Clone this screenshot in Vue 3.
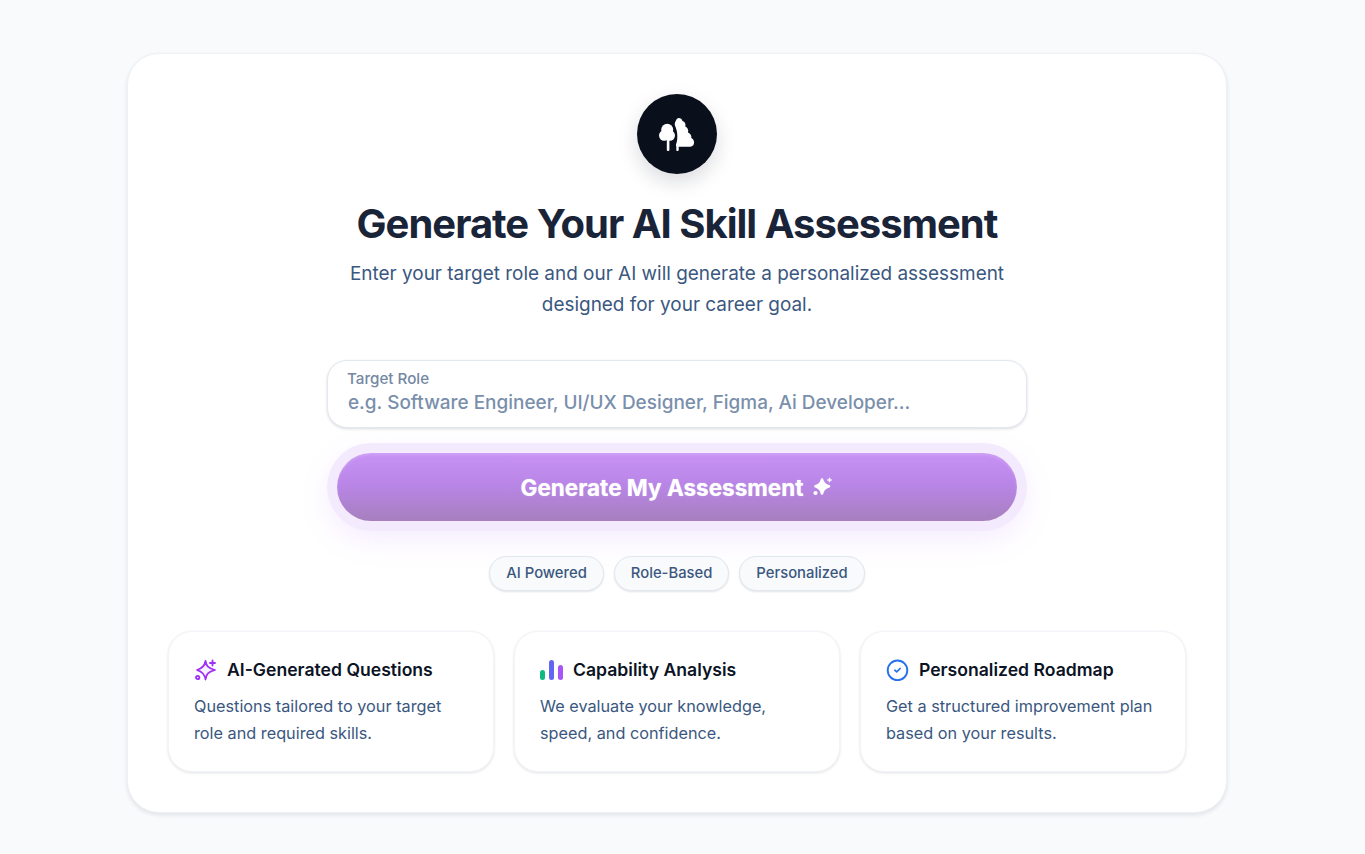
<template>
  <div class="page">
    <div class="panel">
      <div class="logo">
        <svg width="40" height="40" viewBox="0 0 40 40" fill="#fff">
          <circle cx="10.200" cy="15.800" r="6" />
          <circle cx="7.200" cy="21.500" r="5.200" />
          <circle cx="12.800" cy="21.500" r="5.200" />
          <rect x="9.800" y="24" width="2.600" height="13" rx="1" />
          <path d="M21.700 4C23.500 4 25 5.200 25.500 7C27.800 7.600 29 10 28.300 12.600C30.600 13.600 31.800 16 31 18.600C33.400 19.600 34.800 21.800 34.300 24C36.600 25.200 37.600 27.600 36.900 29.800C36.300 32 34.500 32.800 33 32.800H21.700V36C21.700 36.800 21 37 20.500 37C19.800 37 19.300 36.700 19.300 36V32.800C18.800 31 19 30 19.500 29C20.500 26 20.500 22 20 18C19.500 15 18.500 13 17.800 11C17.500 9 18.500 7 19 6.500C19.500 5 20.500 4 21.700 4Z" />
        </svg>
      </div>
      <h1 class="title">Generate Your AI Skill Assessment</h1>
      <p class="subtitle">Enter your target role and our AI will generate a personalized assessment<br />designed for your career goal.</p>

      <label class="field">
        <span class="field-label">Target Role</span>
        <input class="field-input" type="text" placeholder="e.g. Software Engineer, UI/UX Designer, Figma, Ai Developer..." />
      </label>

      <button class="generate">
        Generate My Assessment
        <svg width="20" height="20" viewBox="0 0 20 20" fill="#fff" stroke="#fff" stroke-linejoin="round">
          <path d="M9 2.500c.8 3.800 2.700 5.600 7 6.800-4.300 1.300-6.200 3.200-7 7.200-.8-4-2.700-5.900-6.500-7.200 3.800-1.200 5.700-3 6.500-6.800z" stroke-width="2.600" />
          <circle cx="2.500" cy="16" r="2.100" stroke="none" />
          <path d="M16.500 .8v4.400M14.300 3h4.400" fill="none" stroke-width="1.300" />
        </svg>
      </button>

      <div class="chips">
        <span v-for="chip in chips" :key="chip" class="chip">{{ chip }}</span>
      </div>

      <div class="features">
        <div v-for="item in features" :key="item.title" class="feature">
          <div class="feature-head">
            <svg v-if="item.icon === 'spark'" class="feature-icon" width="22" height="22" viewBox="0 0 22 22" fill="none" stroke="#a02ff5" stroke-width="1.800" stroke-linejoin="round" stroke-linecap="round">
              <path d="M11.500 2c.7 4.800 2.700 7.200 9.500 9-6.800 1.800-8.800 4.200-9.500 9.500-.7-5.300-2.900-7.700-8.500-9.500 5.600-1.800 7.800-4.200 8.500-9z" fill="#f8f1ff" />
              <circle cx="3.700" cy="18.500" r="1.700" fill="#fff" />
              <path d="M18.500 1.500v5M16 4h5" />
            </svg>
            <svg v-else-if="item.icon === 'bars'" class="feature-icon" width="22" height="22" viewBox="0 0 22 22">
              <rect x="0" y="11" width="5" height="10" rx="2.500" fill="#10b981" />
              <rect x="9" y="1" width="5" height="20" rx="2.500" fill="#6366f1" />
              <rect x="18" y="6" width="5" height="15" rx="2.500" fill="#a855f7" />
            </svg>
            <svg v-else class="feature-icon" width="22" height="22" viewBox="0 0 22 22" fill="none" stroke="#2570eb" stroke-linecap="round" stroke-linejoin="round">
              <circle cx="11.500" cy="11.300" r="9.800" stroke-width="1.900" />
              <path d="M8.800 11.200l1.900 1.700 3.400-3.400" stroke-width="1.700" />
            </svg>
            <span class="feature-title">{{ item.title }}</span>
          </div>
          <p class="feature-text">{{ item.line1 }}<br />{{ item.line2 }}</p>
        </div>
      </div>
    </div>
  </div>
</template>

<script setup>
const chips = ['AI Powered', 'Role-Based', 'Personalized'];

const features = [
  { icon: 'spark', title: 'AI-Generated Questions', line1: 'Questions tailored to your target', line2: 'role and required skills.' },
  { icon: 'bars', title: 'Capability Analysis', line1: 'We evaluate your knowledge,', line2: 'speed, and confidence.' },
  { icon: 'check', title: 'Personalized Roadmap', line1: 'Get a structured improvement plan', line2: 'based on your results.' },
];
</script>

<style>
html, body {
  background: #f8fafc;
}
</style>

<style scoped>
.page {
  min-height: 854px;
  box-sizing: border-box;
  padding: 53px 11px 0 0;
  font-family: Inter, "Liberation Sans", sans-serif;
  display: flex;
  justify-content: center;
  background: #f8fafc;
}

.panel {
  width: 1100px;
  height: 760px;
  box-sizing: border-box;
  padding: 40px 40px 40px;
  background: #fff;
  border: 1px solid #eef1f6;
  border-radius: 32px;
  box-shadow: 0 2px 4px rgba(15, 23, 42, 0.1);
  display: flex;
  flex-direction: column;
  align-items: center;
}

.logo {
  width: 80px;
  height: 80px;
  border-radius: 50%;
  background: #0a0f1c;
  box-shadow: 0 8px 20px rgba(15, 23, 42, 0.15);
  display: flex;
  align-items: center;
  justify-content: center;
}

.title {
  margin: 24px 0 0;
  font-size: 40px;
  line-height: 52px;
  font-weight: 700;
  letter-spacing: -1px;
  color: #1a2438;
}

.subtitle {
  margin: 8px 0 0;
  font-size: 18.95px;
  line-height: 31px;
  color: #3a5780;
  text-align: center;
}

.field {
  margin-top: 40px;
  width: 700px;
  height: 68px;
  box-sizing: border-box;
  padding: 9px 20px 0;
  background: #fff;
  border: 1px solid #e2e8f0;
  border-radius: 20px;
  box-shadow: 0 1px 3px rgba(15, 23, 42, 0.15);
  display: flex;
  flex-direction: column;
}

.field-label {
  font-size: 15.2px;
  line-height: 18px;
  font-weight: 500;
  color: #7488a3;
  margin-left: -1px;
}

.field-input {
  margin-top: 2px;
  width: 100%;
  padding: 0;
  border: 0;
  outline: 0;
  background: transparent;
  font-family: inherit;
  font-size: 18.95px;
  line-height: 26px;
  font-weight: 500;
}

.field-input::placeholder {
  color: #7a8fab;
  opacity: 1;
}

.generate {
  margin-top: 25px;
  width: 680px;
  height: 68px;
  border: 0;
  border-radius: 34px;
  background: linear-gradient(180deg, #c792f4 0%, #b986e8 45%, #a77fbe 100%);
  box-shadow: 0 0 0 10px #f4eafd, 0 10px 30px 8px rgba(192, 132, 252, 0.16), inset 0 2px 3px rgba(255, 255, 255, 0.15);
  color: #fff;
  font-family: inherit;
  font-size: 22.5px;
  font-weight: 700;
  text-shadow: 0 0 1px rgba(255, 255, 255, 0.7);
  display: flex;
  align-items: center;
  justify-content: center;
  gap: 10px;
}

.chips {
  margin-top: 35px;
  display: flex;
  gap: 10px;
}

.chip {
  height: 35px;
  box-sizing: border-box;
  padding: 0 16px;
  border: 1px solid #e2e8f0;
  border-radius: 18px;
  background: #f8fafc;
  box-shadow: 0 1px 2px rgba(15, 23, 42, 0.12);
  font-size: 14.8px;
  font-weight: 500;
  line-height: 32px;
  color: #3a5780;
}

.features {
  margin-top: 40px;
  width: 100%;
  display: grid;
  grid-template-columns: repeat(3, 326px);
  justify-content: center;
  gap: 20px;
}

.feature {
  height: 141px;
  box-sizing: border-box;
  padding: 26px 25px 0;
  background: #fff;
  border: 1px solid #f1f4f8;
  border-radius: 24px;
  box-shadow: 0 1px 3px rgba(15, 23, 42, 0.12);
}

.feature-head {
  display: flex;
  align-items: center;
  gap: 11px;
  height: 24px;
}

.feature-icon {
  flex: none;
  overflow: visible;
}

.feature-title {
  margin-bottom: 2px;
  font-size: 17.6px;
  font-weight: 600;
  color: #0b1324;
}

.feature-text {
  margin: 11px 0 0;
  font-size: 16.25px;
  line-height: 27px;
  color: #3a5780;
}
</style>
